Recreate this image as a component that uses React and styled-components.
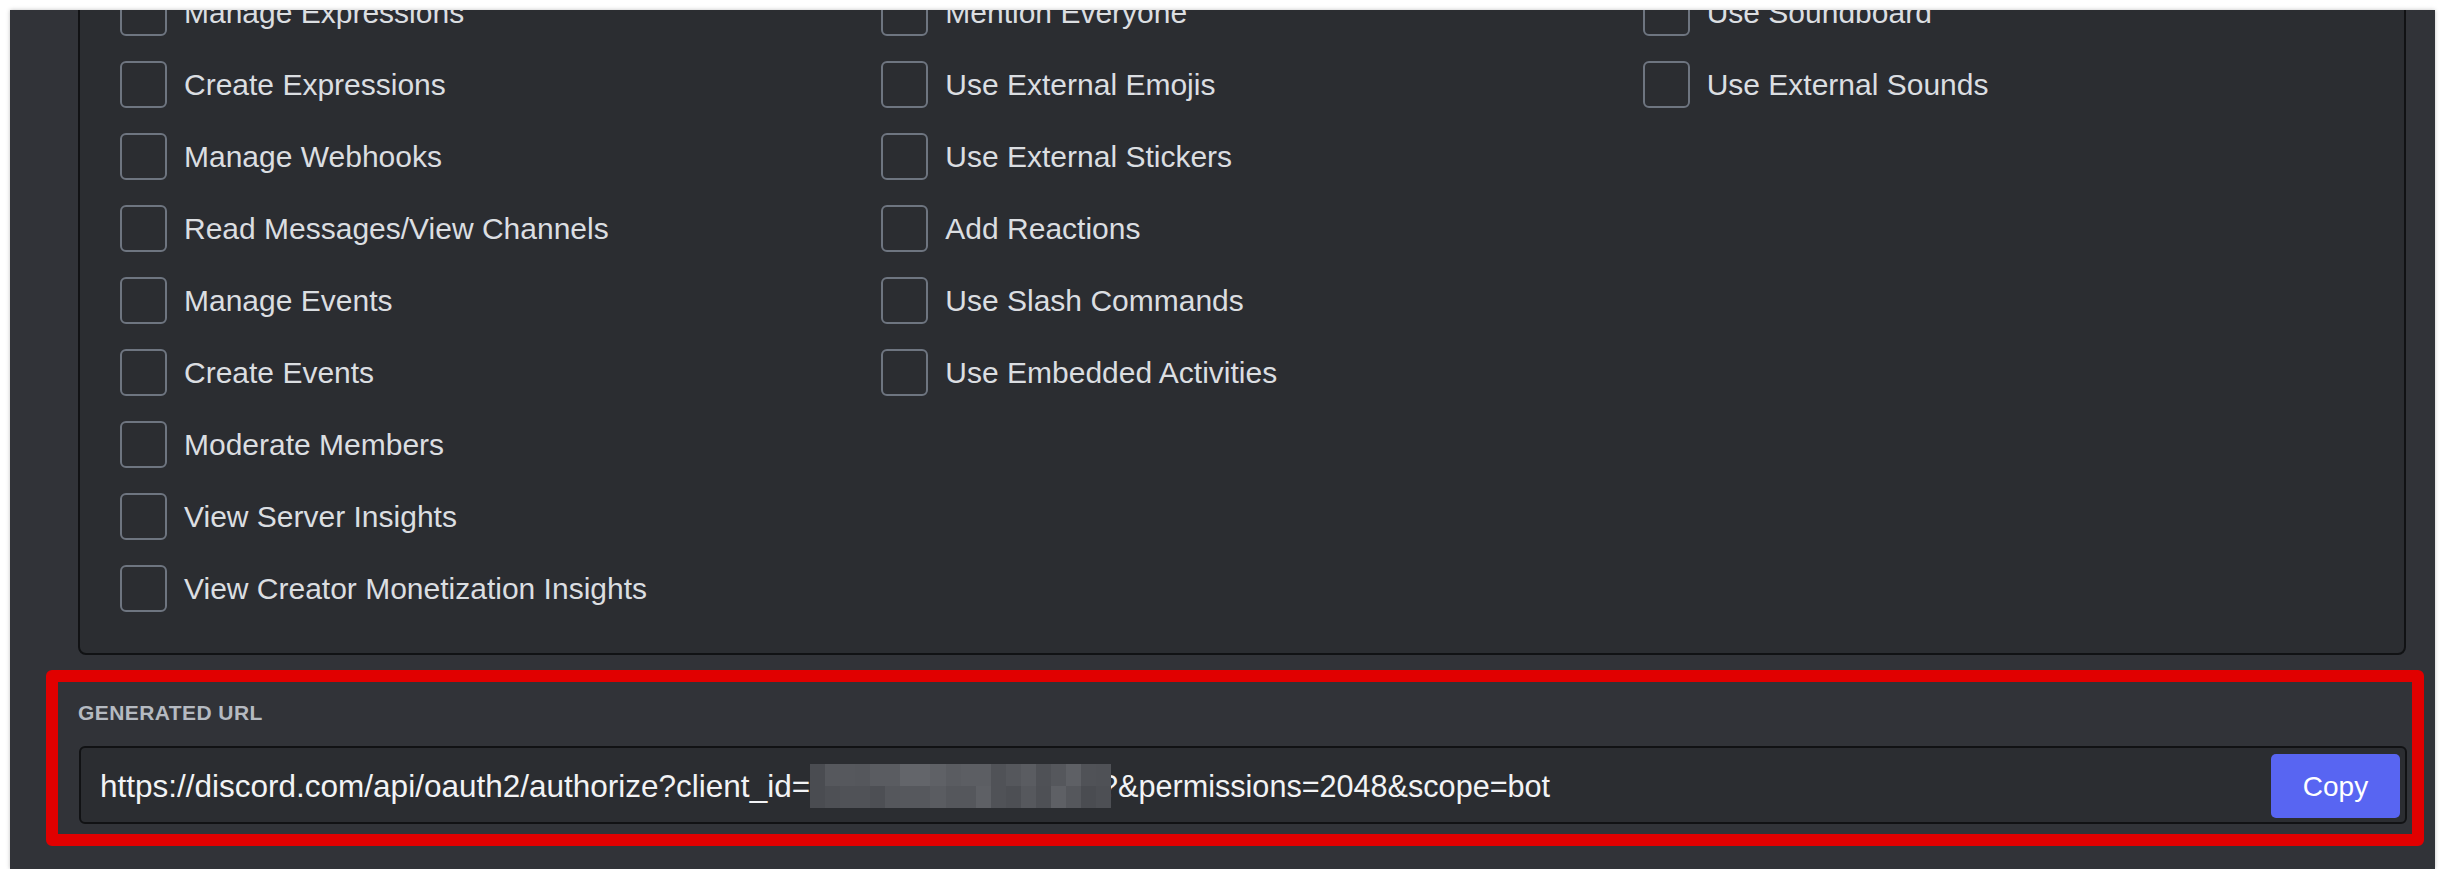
import React from "react";
import styled, { createGlobalStyle } from "styled-components";

const GlobalStyle = createGlobalStyle`
  * { box-sizing: border-box; }
  body {
    margin: 0;
    background: #ffffff;
    font-family: "Liberation Sans", Arial, sans-serif;
  }
`;

const Frame = styled.div`
  margin: 10px 0 0 10px;
  width: 2425px;
  height: 859px;
  background: #313338;
  overflow: hidden;
  padding: 0 29px 0 68px;
  display: flex;
  flex-direction: column;
  box-shadow: 0 0 4px rgba(0, 0, 0, 0.25);
`;

const Panel = styled.div`
  margin-top: -61px;
  border: 2px solid #111214;
  border-radius: 8px;
  background: #2b2d31;
  padding: 38px 0 41px 40px;
  display: grid;
  grid-template-columns: repeat(3, 1fr);
`;

const Column = styled.div`
  display: flex;
  flex-direction: column;
  gap: 25px;
`;

const Row = styled.label`
  display: flex;
  align-items: center;
  gap: 17px;
  height: 47px;
`;

const Box = styled.span`
  flex: none;
  width: 47px;
  height: 47px;
  border: 2px solid #6e7580;
  border-radius: 6px;
`;

const LabelText = styled.span`
  font-size: 30px;
  color: #dbdee1;
  white-space: nowrap;
`;

// red annotation frame around the generated url section
const Section = styled.section`
  margin: 15px -18px 0 -32px;
  border: 12px solid #e10000;
  border-radius: 6px;
  padding: 18px 5px 10px 20px;
`;

const Heading = styled.h2`
  margin: 0 0 20px;
  font-size: 21px;
  line-height: 26px;
  font-weight: 700;
  letter-spacing: 0.02em;
  text-transform: uppercase;
  color: #b5bac1;
`;

const UrlBox = styled.div`
  height: 78px;
  margin-left: 1px;
  border: 2px solid #111214;
  border-radius: 6px;
  background: #2b2d31;
  display: flex;
  align-items: center;
  padding: 2px 5px 0 19px;
`;

const UrlText = styled.div`
  font-size: 31.5px;
  color: #f2f3f5;
  white-space: nowrap;
  display: flex;
  align-items: center;
`;

const Tail = styled.span`
  font-size: 30.6px;
`;

const Mosaic = styled.span`
  position: relative;
  z-index: 1;
  display: grid;
  grid-template-columns: repeat(20, 1fr);
  grid-template-rows: 22px 22px;
  width: 301px;
  margin-right: -10px;
`;

const Cell = styled.span`
  background: ${(p) => p.$shade};
`;

const CopyButton = styled.button`
  margin-left: auto;
  width: 129px;
  height: 64px;
  border: none;
  border-radius: 5px;
  background: #5865f2;
  color: #ffffff;
  font-family: "Liberation Sans", Arial, sans-serif;
  font-size: 28px;
  font-weight: 500;
  padding-top: 2px;
`;

const columns = [
  [
    "Manage Expressions",
    "Create Expressions",
    "Manage Webhooks",
    "Read Messages/View Channels",
    "Manage Events",
    "Create Events",
    "Moderate Members",
    "View Server Insights",
    "View Creator Monetization Insights",
  ],
  [
    "Mention Everyone",
    "Use External Emojis",
    "Use External Stickers",
    "Add Reactions",
    "Use Slash Commands",
    "Use Embedded Activities",
  ],
  ["Use Soundboard", "Use External Sounds"],
];

const topShades = [
  "#4a4c51", "#56585d", "#56585d", "#55575c", "#5a5c61", "#5a5c61", "#63656a",
  "#63656a", "#5f6166", "#5a5c61", "#5c5e63", "#5c5e63", "#505257", "#55575c",
  "#5a5c61", "#4f5156", "#55575c", "#5e6065", "#505257", "#4f5156",
];
const bottomShades = [
  "#4a4c51", "#4e5055", "#505257", "#505257", "#4d4f54", "#55575c", "#56585d",
  "#56585d", "#5a5c61", "#55575c", "#55575c", "#5e6065", "#505257", "#4d4f54",
  "#56585d", "#4e5055", "#5e6065", "#55575c", "#4a4c51", "#4d4f54",
];

function Redaction() {
  return (
    <Mosaic>
      {[...topShades, ...bottomShades].map((s, i) => (
        <Cell key={i} $shade={s} />
      ))}
    </Mosaic>
  );
}

export default function App() {
  return (
    <>
      <GlobalStyle />
      <Frame>
        <Panel>
          {columns.map((col, ci) => (
            <Column key={ci}>
              {col.map((name) => (
                <Row key={name}>
                  <Box />
                  <LabelText>{name}</LabelText>
                </Row>
              ))}
            </Column>
          ))}
        </Panel>
        <Section>
          <Heading>Generated URL</Heading>
          <UrlBox>
            <UrlText>
              <span>https://discord.com/api/oauth2/authorize?client_id=</span>
              <Redaction />
              <Tail>?&amp;permissions=2048&amp;scope=bot</Tail>
            </UrlText>
            <CopyButton>Copy</CopyButton>
          </UrlBox>
        </Section>
      </Frame>
    </>
  );
}
